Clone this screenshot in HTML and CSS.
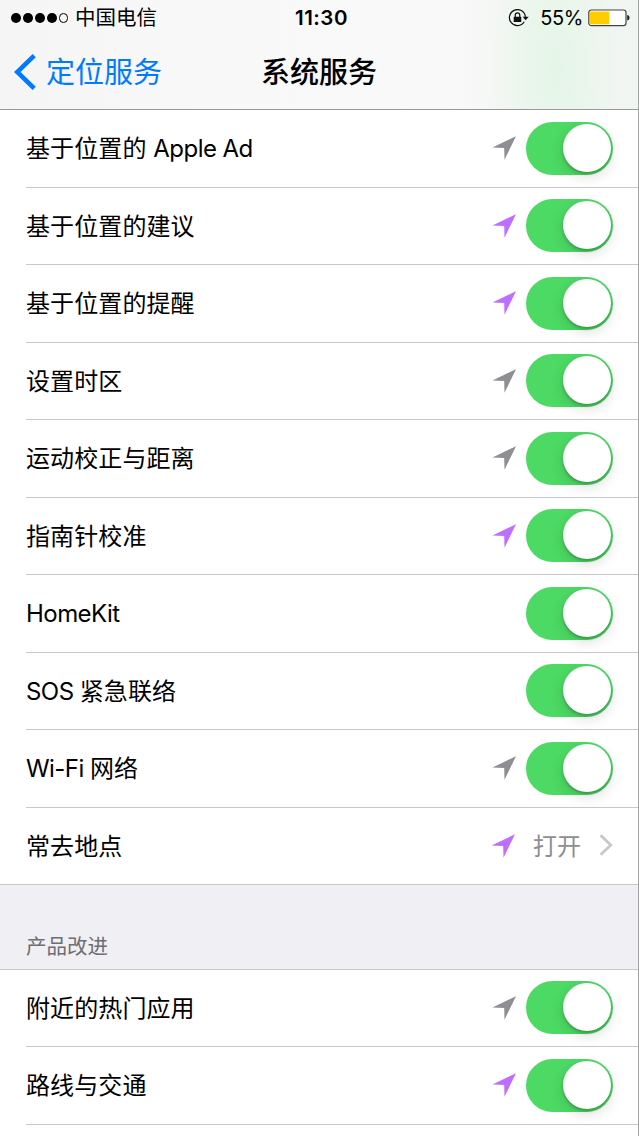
FILE: index.html
```html
<!DOCTYPE html>
<html lang="zh-CN">
<head>
    <meta charset="UTF-8">
    <meta name="viewport" content="width=device-width, initial-scale=1.0">
    <title>系统服务</title>
    <link rel="stylesheet" href="styles.css">
</head>
<body>

    <svg class="symbols" width="0" height="0">
        <symbol id="arrow" viewBox="0 0 24 24">
            <path d="M24 0.2 L12.5 23.7 L12.2 12.1 L0.5 11.6 Z"/>
        </symbol>
    </svg>

    <div class="screen">
        <header class="header">
            <div class="status-bar">
                <div class="signal">
                    <i class="dot"></i><i class="dot"></i><i class="dot"></i><i class="dot"></i><i class="dot empty"></i>
                </div>
                <span class="carrier">中国电信</span>
                <span class="time">11:30</span>
                <div class="status-right">
                    <svg class="lock" width="21" height="18" viewBox="0 0 21 18">
                        <path d="M16.2 12.8 A8 8 0 1 1 17.4 8.2" fill="none" stroke="#111" stroke-width="1.2"/>
                        <path d="M14.6 7.7 H20.8 L17.6 11.2 Z" fill="#111"/>
                        <rect x="5.7" y="7.8" width="7.6" height="5.2" rx="0.6" fill="#111"/>
                        <path d="M7.2 8 V6.2 A2.3 2.3 0 0 1 11.8 6.2 V8" fill="none" stroke="#111" stroke-width="1.2"/>
                    </svg>
                    <span class="percent">55%</span>
                    <svg class="battery" width="42" height="18" viewBox="0 0 42 18">
                        <rect x="0.8" y="1" width="37.2" height="15.6" rx="2.6" fill="#fff" stroke="#444" stroke-width="1.2"/>
                        <rect x="2" y="2.4" width="19.3" height="12.8" rx="1" fill="#ffcc00"/>
                        <path d="M39.2 6 Q41.6 6.3 41.6 8.8 Q41.6 11.3 39.2 11.6 Z" fill="#222"/>
                    </svg>
                </div>
            </div>
            <nav class="nav-bar">
                <a class="back" href="#">
                    <svg class="back-icon" width="22" height="36" viewBox="0 0 22 36">
                        <path d="M20.2 1.7 L3.2 18 L20.2 34.3" fill="none" stroke="#007aff" stroke-width="4.6"/>
                    </svg>
                    <span>定位服务</span>
                </a>
                <h1 class="title">系统服务</h1>
            </nav>
        </header>

        <ul class="list">
            <li class="row">
                <span class="label">基于位置的 <span class="latin">Apple Ad</span></span>
                <svg class="arrow gray"><use href="#arrow"/></svg>
                <span class="switch"></span>
            </li>
            <li class="row">
                <span class="label">基于位置的建议</span>
                <svg class="arrow purple"><use href="#arrow"/></svg>
                <span class="switch"></span>
            </li>
            <li class="row">
                <span class="label">基于位置的提醒</span>
                <svg class="arrow purple"><use href="#arrow"/></svg>
                <span class="switch"></span>
            </li>
            <li class="row">
                <span class="label">设置时区</span>
                <svg class="arrow gray"><use href="#arrow"/></svg>
                <span class="switch"></span>
            </li>
            <li class="row">
                <span class="label">运动校正与距离</span>
                <svg class="arrow gray"><use href="#arrow"/></svg>
                <span class="switch"></span>
            </li>
            <li class="row">
                <span class="label">指南针校准</span>
                <svg class="arrow purple"><use href="#arrow"/></svg>
                <span class="switch"></span>
            </li>
            <li class="row">
                <span class="label"><span class="latin">HomeKit</span></span>
                <span class="switch"></span>
            </li>
            <li class="row">
                <span class="label"><span class="latin">SOS </span>紧急联络</span>
                <span class="switch"></span>
            </li>
            <li class="row">
                <span class="label"><span class="latin">Wi-Fi </span>网络</span>
                <svg class="arrow gray"><use href="#arrow"/></svg>
                <span class="switch"></span>
            </li>
            <li class="row last">
                <span class="label">常去地点</span>
                <svg class="arrow purple"><use href="#arrow"/></svg>
                <span class="value">打开</span>
                <svg class="chevron" width="14" height="22" viewBox="0 0 14 22">
                    <path d="M1.6 1.3 L11.8 11 L1.6 20.7" fill="none" stroke="#c7c7cc" stroke-width="2.8"/>
                </svg>
            </li>
        </ul>

        <h2 class="section-title">产品改进</h2>

        <ul class="list">
            <li class="row">
                <span class="label">附近的热门应用</span>
                <svg class="arrow gray"><use href="#arrow"/></svg>
                <span class="switch"></span>
            </li>
            <li class="row">
                <span class="label">路线与交通</span>
                <svg class="arrow purple"><use href="#arrow"/></svg>
                <span class="switch"></span>
            </li>
        </ul>
    </div>

</body>
</html>
```
FILE: styles.css
```css
* {
    box-sizing: border-box;
}
body {
    font-family: Inter, "Noto Sans CJK SC", sans-serif;
    background-color: #fff;
    color: #000;
    margin: 0;
    overflow: hidden;
}
.symbols {
    display: block;
}
.screen {
    height: 1136px;
    border-right: 1px solid #a3a3a5;
    overflow: hidden;
}
.header {
    height: 110px;
    border-bottom: 1px solid #999;
    background: radial-gradient(ellipse 65px 150px at 556px 70px, #e4f6e7, rgba(228, 246, 231, 0)),
        linear-gradient(to right, #f5f5f5 0, #f8f8f8 200px, #f9f9f9 450px, #f1f6f2 530px, #f0f5f1 100%);
}
.status-bar {
    display: grid;
    grid-template-columns: 64px 220px 1fr auto;
    align-items: center;
    height: 36px;
    padding: 0 8px 0 11px;
    font-size: 20px;
    line-height: 36px;
}
.signal {
    display: flex;
    gap: 2px;
}
.dot {
    width: 9.9px;
    height: 9.9px;
    border-radius: 50%;
    background-color: #000;
}
.dot.empty {
    background-color: transparent;
    border: 1px solid #000;
}
.carrier {
    font-size: 20.5px;
}
.time {
    font-weight: 600;
    font-size: 20.5px;
    letter-spacing: 0.5px;
}
.status-right {
    display: flex;
    align-items: center;
}
.percent {
    margin: 0 5px 0 11px;
    letter-spacing: -0.4px;
}
.nav-bar {
    display: grid;
    grid-template-columns: 1fr auto 1fr;
    align-items: center;
    height: 72px;
    padding: 0 14px 0 14px;
    font-size: 29px;
    line-height: 74px;
}
.back {
    display: flex;
    align-items: center;
    gap: 10px;
    height: 72px;
    color: #007aff;
    text-decoration: none;
}
.back-icon {
    margin-bottom: 2px;
}
.title {
    margin: 0;
    font-size: 29px;
    font-weight: 500;
}
.list {
    list-style: none;
    margin: 0;
    padding: 0 0 0 26px;
}
.row {
    display: flex;
    align-items: center;
    height: 77.5px;
    padding-right: 25px;
    border-bottom: 1px solid #c8c7cc;
}
.row.last {
    margin-left: -26px;
    padding-left: 26px;
}
.label {
    flex: 1;
    padding-top: 2px;
    font-size: 24px;
    line-height: 30px;
    letter-spacing: 0.1px;
}
.latin {
    letter-spacing: -0.55px;
}
.arrow {
    width: 24px;
    height: 24px;
    margin-right: 10px;
}
.gray {
    fill: #8e8e93;
}
.purple {
    fill: #bf6fff;
}
.switch {
    width: 87px;
    height: 53px;
    padding: 2px;
    border-radius: 27px;
    background-color: #4cd964;
}
.switch::before {
    content: "";
    display: block;
    width: 48px;
    height: 48px;
    margin-left: 35px;
    border-radius: 50%;
    background-color: #fff;
    box-shadow: 0 5px 14px rgba(0, 0, 0, 0.13), 0 2px 3px rgba(0, 0, 0, 0.22);
}
.value {
    margin: 0 18px 0 8px;
    padding-top: 2px;
    font-size: 24px;
    line-height: 30px;
    color: #8e8e93;
}
.chevron {
    margin-bottom: 1px;
}
.section-title {
    display: flex;
    align-items: flex-end;
    height: 84.5px;
    margin: 0;
    padding: 0 26px 9px;
    border-bottom: 1px solid #c8c7cc;
    background-color: #efeff4;
    color: #6d6d72;
    font-size: 20.5px;
    font-weight: 400;
}
```
